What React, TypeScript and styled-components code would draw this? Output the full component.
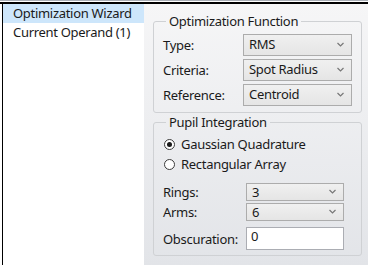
import styled, { createGlobalStyle } from "styled-components";

const Global = createGlobalStyle`
  html, body {
    margin: 0;
    padding: 0;
    background: #ffffff;
  }
  body {
    font-family: "Noto Sans", "Noto Sans CJK SC", sans-serif;
    font-size: 13px;
    letter-spacing: -0.3px;
    color: #1a1a1a;
  }
`;

const Window = styled.div`
  width: 368px;
  height: 265px;
  box-sizing: border-box;
  border-top: 1px solid #a9aeb6;
  display: flex;
  flex-direction: column;
  overflow: hidden;
`;

const Body = styled.div`
  flex: 1;
  display: flex;
  border-top: 2px solid #000000;
  margin-top: 1px;
`;

const Nav = styled.div`
  width: 141px;
  border-left: 1px solid #000000;
  margin-left: 2px;
  background: #ffffff;
`;

const NavItem = styled.div<{ $selected?: boolean }>`
  height: 19px;
  line-height: 19px;
  padding-left: 10px;
  background: ${(p) => (p.$selected ? "#cde6fb" : "transparent")};
  white-space: nowrap;
`;

const Pane = styled.div`
  flex: 1;
  background: linear-gradient(#f6f6f7, #e2e4e8);
  padding: 9px 6px 0 9px;
  display: flex;
  flex-direction: column;
  gap: 1px;
`;

const Group = styled.fieldset<{ $padTop: number; $padRight: number }>`
  margin: 0;
  border: 1px solid #cfd1d4;
  border-radius: 3px;
  padding: ${(p) => p.$padTop}px ${(p) => p.$padRight}px 5px 9px;
  display: flex;
  flex-direction: column;
`;

const Legend = styled.legend`
  padding: 0 3px;
  margin-left: 3px;
  font-size: 13px;
  line-height: 16px;
`;

const FieldRow = styled.div<{ $labelWidth: number; $height: number; $gapAbove?: number }>`
  display: grid;
  grid-template-columns: ${(p) => p.$labelWidth}px 1fr;
  align-items: center;
  height: ${(p) => p.$height}px;
  margin-top: ${(p) => p.$gapAbove ?? 0}px;
`;

const Label = styled.span`
  white-space: nowrap;
`;

const Select = styled.div<{ $tall?: boolean }>`
  height: ${(p) => (p.$tall ? 22 : 18)}px;
  box-sizing: border-box;
  border: 1px solid #acacac;
  background: linear-gradient(#f0f0f0, #e5e5e5);
  display: flex;
  align-items: center;
  justify-content: space-between;
  padding: 0 7px 1px 5px;
  line-height: 16px;
`;

const Arrow = styled.svg`
  width: 7px;
  height: 5px;
  flex: none;
`;

const TextBox = styled.div`
  height: 23px;
  box-sizing: border-box;
  border: 1px solid #abadb3;
  background: #ffffff;
  padding: 0 4px;
  line-height: 16px;
`;

const RadioRow = styled.label`
  display: flex;
  align-items: center;
  gap: 6px;
  height: 20px;
  padding-left: 1px;
`;

const RadioDot = styled.span<{ $checked?: boolean }>`
  width: 11px;
  height: 11px;
  box-sizing: border-box;
  border-radius: 50%;
  border: 1px solid #3c3c3c;
  background: #ffffff;
  display: flex;
  align-items: center;
  justify-content: center;
  &::after {
    content: "";
    width: 5px;
    height: 5px;
    border-radius: 50%;
    background: ${(p) => (p.$checked ? "#1a1a1a" : "transparent")};
  }
`;

function Combo({ value, tall }: { value: string; tall?: boolean }) {
  return (
    <Select $tall={tall}>
      <span>{value}</span>
      <Arrow viewBox="0 0 7 5">
        <path d="M0.5 1 L3.5 4 L6.5 1" fill="none" stroke="#777" strokeWidth="1.2" />
      </Arrow>
    </Select>
  );
}

export default function App() {
  return (
    <Window>
      <Global />
      <Body>
        <Nav>
          <NavItem $selected>Optimization Wizard</NavItem>
          <NavItem>Current Operand (1)</NavItem>
        </Nav>
        <Pane>
          <Group $padTop={3} $padRight={9}>
            <Legend>Optimization Function</Legend>
            <FieldRow $labelWidth={80} $height={25}>
              <Label>Type:</Label>
              <Combo value="RMS" tall />
            </FieldRow>
            <FieldRow $labelWidth={80} $height={25}>
              <Label>Criteria:</Label>
              <Combo value="Spot Radius" tall />
            </FieldRow>
            <FieldRow $labelWidth={80} $height={25}>
              <Label>Reference:</Label>
              <Combo value="Centroid" tall />
            </FieldRow>
          </Group>
          <Group $padTop={4} $padRight={17}>
            <Legend>Pupil Integration</Legend>
            <RadioRow>
              <RadioDot $checked />
              Gaussian Quadrature
            </RadioRow>
            <RadioRow>
              <RadioDot />
              Rectangular Array
            </RadioRow>
            <FieldRow $labelWidth={83} $height={20} $gapAbove={8}>
              <Label>Rings:</Label>
              <Combo value="3" />
            </FieldRow>
            <FieldRow $labelWidth={83} $height={20}>
              <Label>Arms:</Label>
              <Combo value="6" />
            </FieldRow>
            <FieldRow $labelWidth={83} $height={23} $gapAbove={5}>
              <Label>Obscuration:</Label>
              <TextBox>0</TextBox>
            </FieldRow>
          </Group>
        </Pane>
      </Body>
    </Window>
  );
}
